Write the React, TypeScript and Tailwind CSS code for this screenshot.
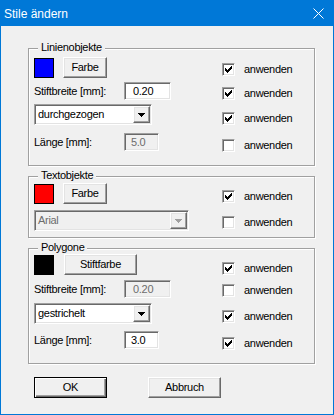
import React from 'react'

const font = "font-['Liberation_Sans',Arial,sans-serif]"
const field =
  'border border-t-[#a0a0a0] border-l-[#a0a0a0] border-b-white border-r-white shadow-[inset_1px_1px_0_#696969,inset_-1px_-1px_0_#e3e3e3]'
const raised =
  'border border-t-white border-l-white border-b-[#696969] border-r-[#696969] shadow-[inset_-1px_-1px_0_#a0a0a0,inset_1px_1px_0_#e3e3e3] bg-[#f0f0f0]'

function Btn({ label, w, isDefault }: { label: string; w: string; isDefault?: boolean }) {
  const cls = isDefault
    ? 'border border-black bg-[#f0f0f0] shadow-[inset_1px_1px_0_#fff,inset_-1px_-1px_0_#696969,inset_-2px_-2px_0_#a0a0a0]'
    : raised
  return <div className={`${cls} ${w} h-[21px] flex items-center justify-center text-black`}>{label}</div>
}

function Swatch({ color }: { color: string }) {
  return <div className={`w-[20px] h-[20px] border border-black ${color}`} />
}

function TextBox({ value, w, pl, disabled }: { value: string; w: string; pl: string; disabled?: boolean }) {
  return (
    <div
      className={`${field} ${w} h-[18px] flex items-center ${pl} ${
        disabled ? 'bg-[#f0f0f0] text-[#6d6d6d]' : 'bg-white text-black'
      }`}
    >
      {value}
    </div>
  )
}

function Arrow({ disabled }: { disabled?: boolean }) {
  return (
    <div className={`${raised} w-[17px] h-full flex items-center justify-center`}>
      <svg width="7" height="4" viewBox="0 0 7 4" shapeRendering="crispEdges">
        <polygon points="0,0 7,0 3.5,4" fill={disabled ? '#a0a0a0' : '#000'} />
      </svg>
    </div>
  )
}

function Select({ value, w, disabled }: { value: string; w: string; disabled?: boolean }) {
  return (
    <div
      className={`${field} ${w} h-[21px] p-[1px] flex ${
        disabled ? 'bg-[#f0f0f0] text-[#6d6d6d]' : 'bg-white text-black'
      }`}
    >
      <div className="flex-1 flex items-center pl-[2px]">{value}</div>
      <Arrow disabled={disabled} />
    </div>
  )
}

function Check({ on, mt }: { on: boolean; mt: string }) {
  return (
    <div className={`flex items-center h-[13px] ${mt}`}>
      <div className={`${field} w-[13px] h-[13px] bg-white flex items-center justify-center`}>
        {on && (
          <svg width="7" height="7" viewBox="0 0 7 7" shapeRendering="crispEdges">
            <path d="M0 2h1v1h1v1h1v-1h1v-1h1v-1h1v-1h1v3h-1v1h-1v1h-1v1h-1v1h-1v-1h-1v-1h-1z" fill="#000" />
          </svg>
        )}
      </div>
      <span className="ml-[9px] text-black">anwenden</span>
    </div>
  )
}

function Group({ title, h, mt, children }: { title: string; h: string; mt?: string; children: React.ReactNode }) {
  return (
    <div
      className={`relative w-[287px] ${h} ${mt ?? ''} border border-[#a0a0a0] shadow-[inset_1px_1px_0_#fff,1px_1px_0_#fff] flex`}
    >
      <span className="absolute -top-[8px] left-[9px] px-[3px] leading-[13px] bg-[#f0f0f0] text-black">{title}</span>
      {children}
    </div>
  )
}

export default function App() {
  return (
    <div className={`${font} text-[11px] tracking-[-0.3px] w-[334px] h-[415px] border border-[#0078d7] bg-[#f0f0f0] flex flex-col`}>
      {/* Title bar */}
      <div className="h-[25px] bg-[#0078d7] flex items-center justify-between pl-[3px] pr-[9px]">
        <span className="text-white text-[12px] tracking-normal">Stile ändern</span>
        <svg width="11" height="11" viewBox="0 0 11 11">
          <path d="M0.5 0.5L10.5 10.5M10.5 0.5L0.5 10.5" stroke="#fff" strokeWidth="1" />
        </svg>
      </div>

      <div className="pl-[27px] pt-[22px] flex flex-col">
        {/* Linienobjekte */}
        <Group title="Linienobjekte" h="h-[118px]">
          <div className="w-[193px] pl-[5px] flex flex-col">
            <div className="mt-[8px] flex items-center">
              <Swatch color="bg-[#0000ff]" />
              <div className="ml-[9px]">
                <Btn label="Farbe" w="w-[44px]" />
              </div>
            </div>
            <div className="mt-[4px] flex items-center">
              <span className="w-[90px]">Stiftbreite [mm]:</span>
              <TextBox value="0.20" w="w-[47px]" pl="pl-[8px]" />
            </div>
            <div className="mt-[4px]">
              <Select value="durchgezogen" w="w-[118px]" />
            </div>
            <div className="mt-[8px] flex items-center">
              <span className="w-[90px]">Länge [mm]:</span>
              <TextBox value="5.0" w="w-[35px]" pl="pl-[6px]" disabled />
            </div>
          </div>
          <div className="flex flex-col">
            <Check on mt="mt-[14px]" />
            <Check on mt="mt-[11px]" />
            <Check on mt="mt-[12px]" />
            <Check on={false} mt="mt-[14px]" />
          </div>
        </Group>

        {/* Textobjekte */}
        <Group title="Textobjekte" h="h-[62px]" mt="mt-[10px]">
          <div className="w-[193px] pl-[5px] flex flex-col">
            <div className="mt-[6px] flex items-center">
              <Swatch color="bg-[#ff0000]" />
              <div className="ml-[9px]">
                <Btn label="Farbe" w="w-[44px]" />
              </div>
            </div>
            <div className="mt-[6px]">
              <Select value="Arial" w="w-[155px]" disabled />
            </div>
          </div>
          <div className="flex flex-col">
            <Check on mt="mt-[13px]" />
            <Check on={false} mt="mt-[13px]" />
          </div>
        </Group>

        {/* Polygone */}
        <Group title="Polygone" h="h-[116px]" mt="mt-[10px]">
          <div className="w-[193px] pl-[5px] flex flex-col">
            <div className="mt-[5px] flex items-center">
              <div className="w-[20px] h-[20px] bg-black" />
              <div className="ml-[10px]">
                <Btn label="Stiftfarbe" w="w-[73px]" />
              </div>
            </div>
            <div className="mt-[5px] flex items-center">
              <span className="w-[90px]">Stiftbreite [mm]:</span>
              <TextBox value="0.20" w="w-[47px]" pl="pl-[8px]" disabled />
            </div>
            <div className="mt-[5px]">
              <Select value="gestrichelt" w="w-[118px]" />
            </div>
            <div className="mt-[7px] flex items-center">
              <span className="w-[90px]">Länge [mm]:</span>
              <TextBox value="3.0" w="w-[35px]" pl="pl-[6px]" />
            </div>
          </div>
          <div className="flex flex-col">
            <Check on mt="mt-[13px]" />
            <Check on={false} mt="mt-[9px]" />
            <Check on mt="mt-[13px]" />
            <Check on mt="mt-[14px]" />
          </div>
        </Group>

        {/* Buttons */}
        <div className="mt-[13px] pl-[6px] flex gap-[41px]">
          <Btn label="OK" w="w-[73px]" isDefault />
          <Btn label="Abbruch" w="w-[73px]" />
        </div>
      </div>
    </div>
  )
}
